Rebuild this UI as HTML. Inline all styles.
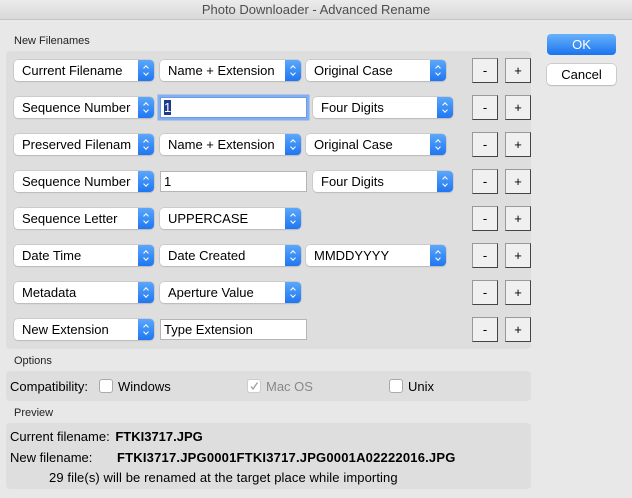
<!DOCTYPE html>
<html><head><style>
*{box-sizing:border-box;margin:0;padding:0}
body{width:632px;height:498px;background:#e8e8e8;font-family:"Liberation Sans",sans-serif;font-size:13px;color:#000;position:relative;overflow:hidden}
.title{position:absolute;left:0;top:0;width:632px;height:20px;background:linear-gradient(#ececec,#d9d9d9);border-bottom:1px solid #c4c4c4;text-align:center;font-size:13px;line-height:20px;color:#4d4d4d}
.lbl{position:absolute;font-size:11px;color:#222}
.panel{position:absolute;background:#dedede;border-radius:4px}
.pop{position:absolute;height:21px;background:#fff;border-radius:4px;box-shadow:0 0 0 .5px #b8b8b8,0 1px 1px rgba(0,0,0,.15);padding-left:8px;line-height:21px;font-size:13px}
.pop .ar{position:absolute;right:0;top:0;width:16px;height:21px;background:linear-gradient(#5ba7fb,#1f76f1);border-radius:0 4px 4px 0}
.pop .ar:before{content:"";position:absolute;left:6px;top:6px;width:3px;height:3px;border-left:1.3px solid #fff;border-top:1.3px solid #fff;transform:rotate(45deg)}
.pop .ar:after{content:"";position:absolute;left:6px;top:11px;width:3px;height:3px;border-right:1.3px solid #fff;border-bottom:1.3px solid #fff;transform:rotate(45deg)}
.tf{position:absolute;height:21px;background:#fff;border:1px solid #b5b5b5;padding-left:3px;line-height:19px;font-size:13px}
.tf.f{box-shadow:0 0 0 2.5px #84aef0;border-color:#6a9ce8}
.bt{position:absolute;width:26px;height:25px;background:#f0f0f0;border:1px solid #999;border-right-color:#444;border-bottom-color:#444;text-align:center;line-height:23px;font-size:13px}
.mb{position:absolute;left:547px;width:69px;height:21px;border-radius:4px;text-align:center;line-height:21px;font-size:13px}
.opt{position:absolute;top:378px;display:flex;align-items:center;height:16px}
.cb{display:inline-block;width:14px;height:14px;background:#fff;border:1px solid #aaa;border-radius:3px;margin-right:5px;position:relative}
</style></head><body>
<div class="title">Photo Downloader - Advanced Rename</div>
<div class="lbl" style="left:14px;top:35px">New Filenames</div>
<div class="panel" style="left:6px;top:51px;width:525px;height:298px"></div>
<div class="mb" style="top:34px;background:linear-gradient(#68b1fb,#1b74f0);color:#fff">OK</div>
<div class="mb" style="top:64px;background:#fff;box-shadow:0 0 0 .5px #b0b0b0,0 1px 1px rgba(0,0,0,.15)">Cancel</div>

<div class="pop" style="left:14px;top:60px;width:140px">Current Filename<span class="ar"></span></div>
<div class="pop" style="left:160px;top:60px;width:141px">Name + Extension<span class="ar"></span></div>
<div class="pop" style="left:306px;top:60px;width:140px">Original Case<span class="ar"></span></div>

<div class="pop" style="left:14px;top:97px;width:140px;white-space:nowrap;overflow:hidden">Sequence Number<span class="ar"></span></div>
<div class="tf f" style="left:160px;top:97px;width:147px"><span style="background:#1e3a8a;color:#fff">1</span></div>
<div class="pop" style="left:313px;top:97px;width:140px">Four Digits<span class="ar"></span></div>

<div class="pop" style="left:14px;top:134px;width:140px;white-space:nowrap;overflow:hidden">Preserved Filenam<span class="ar"></span></div>
<div class="pop" style="left:160px;top:134px;width:141px">Name + Extension<span class="ar"></span></div>
<div class="pop" style="left:306px;top:134px;width:140px">Original Case<span class="ar"></span></div>

<div class="pop" style="left:14px;top:171px;width:140px;white-space:nowrap;overflow:hidden">Sequence Number<span class="ar"></span></div>
<div class="tf" style="left:160px;top:171px;width:147px">1</div>
<div class="pop" style="left:313px;top:171px;width:140px">Four Digits<span class="ar"></span></div>

<div class="pop" style="left:14px;top:208px;width:140px">Sequence Letter<span class="ar"></span></div>
<div class="pop" style="left:160px;top:208px;width:141px">UPPERCASE<span class="ar"></span></div>

<div class="pop" style="left:14px;top:245px;width:140px">Date Time<span class="ar"></span></div>
<div class="pop" style="left:160px;top:245px;width:141px">Date Created<span class="ar"></span></div>
<div class="pop" style="left:306px;top:245px;width:140px">MMDDYYYY<span class="ar"></span></div>

<div class="pop" style="left:14px;top:282px;width:140px">Metadata<span class="ar"></span></div>
<div class="pop" style="left:160px;top:282px;width:141px">Aperture Value<span class="ar"></span></div>

<div class="pop" style="left:14px;top:319px;width:140px">New Extension<span class="ar"></span></div>
<div class="tf" style="left:160px;top:319px;width:147px">Type Extension</div>

<div class="bt" style="left:472px;top:58px">-</div><div class="bt" style="left:505px;top:58px">+</div>
<div class="bt" style="left:472px;top:95px">-</div><div class="bt" style="left:505px;top:95px">+</div>
<div class="bt" style="left:472px;top:132px">-</div><div class="bt" style="left:505px;top:132px">+</div>
<div class="bt" style="left:472px;top:169px">-</div><div class="bt" style="left:505px;top:169px">+</div>
<div class="bt" style="left:472px;top:206px">-</div><div class="bt" style="left:505px;top:206px">+</div>
<div class="bt" style="left:472px;top:243px">-</div><div class="bt" style="left:505px;top:243px">+</div>
<div class="bt" style="left:472px;top:280px">-</div><div class="bt" style="left:505px;top:280px">+</div>
<div class="bt" style="left:472px;top:317px">-</div><div class="bt" style="left:505px;top:317px">+</div>

<div class="lbl" style="left:14px;top:355px">Options</div>
<div class="panel" style="left:6px;top:371px;width:525px;height:30px"></div>
<div class="opt" style="left:10px">Compatibility:</div>
<div class="opt" style="left:99px"><span class="cb"></span>Windows</div>
<div class="opt" style="left:247px;color:#888"><span class="cb" style="border-color:#ccc"><svg width="12" height="12" style="position:absolute;left:0;top:0"><path d="M3 6.5 L5 9 L9.5 2.5" stroke="#999" stroke-width="1.2" fill="none"/></svg></span>Mac OS</div>
<div class="opt" style="left:389px"><span class="cb"></span>Unix</div>

<div class="lbl" style="left:14px;top:407px">Preview</div>
<div class="panel" style="left:6px;top:423px;width:525px;height:66px"></div>
<div style="position:absolute;left:10px;top:429px">Current filename: <b style="margin-left:2px">FTKI3717.JPG</b></div>
<div style="position:absolute;left:10px;top:450px">New filename:</div>
<div style="position:absolute;left:117px;top:450px;font-weight:bold;letter-spacing:0.2px">FTKI3717.JPG0001FTKI3717.JPG0001A02222016.JPG</div>
<div style="position:absolute;left:49px;top:470px;letter-spacing:0.1px">29 file(s) will be renamed at the target place while importing</div>
</body></html>
